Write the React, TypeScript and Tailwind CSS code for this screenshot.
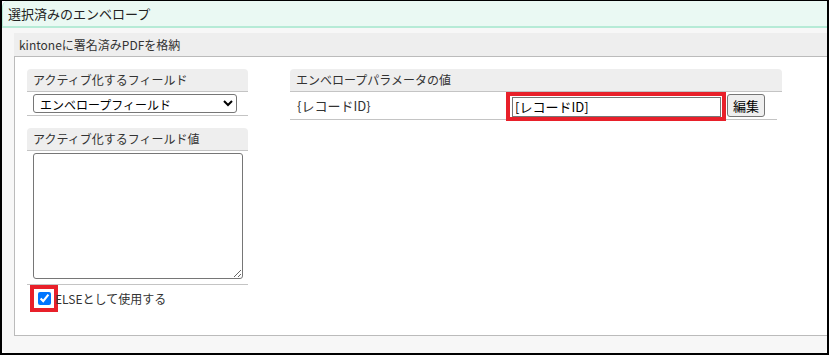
import React from "react";

const font = { fontFamily: '"Noto Sans CJK JP", "Noto Sans", sans-serif' };

function SectionHead({ children, className = "" }: { children: React.ReactNode; className?: string }) {
  return (
    <div
      className={`flex h-[23px] items-center rounded-t-[4px] border-b border-[#c4c4c4] bg-[#eeeeee] px-[6px] text-[12px] leading-none text-[#333] ${className}`}
    >
      {children}
    </div>
  );
}

export default function App() {
  return (
    <div
      className="flex h-[355px] w-[829px] flex-col border-t border-l-2 border-r-2 border-b-2 border-black bg-white"
      style={font}
    >
      <div className="flex h-[27px] shrink-0 items-center rounded-tl-[6px] border-b-2 border-l border-[#b6ebd6] bg-[#eaf9f3] pl-[5px] text-[13px] leading-none text-[#222]">
        選択済みのエンベロープ
      </div>

      <div className="flex flex-1 flex-col rounded-b-[6px] bg-[#f7f7f7] pt-[5px] pl-[12px] pb-[17px]">
        <div className="flex flex-1 flex-col">
          <div className="flex h-[24px] items-center border-b border-[#bbbbbb] bg-[#eeeeee] pl-[5px] text-[12px] leading-none text-[#333]">
            kintoneに署名済みPDFを格納
          </div>

          <div className="flex flex-1 border-l border-b border-[#bbbbbb] bg-white pt-[12px] pl-[12px]">
            <div className="flex w-[221px] flex-col">
              <SectionHead>アクティブ化するフィールド</SectionHead>
              <div className="border-b border-[#c4c4c4] pt-[2px] pb-[2px] pl-[6px]">
                <select
                  className="block h-[19px] w-[204px] rounded-[3px] border border-[#767676] bg-white pl-[2px] text-[12px] leading-none text-black"
                  style={font}
                  defaultValue="env"
                >
                  <option value="env">エンベロープフィールド</option>
                </select>
              </div>

              <SectionHead className="mt-[12px]">アクティブ化するフィールド値</SectionHead>
              <div className="border-b border-[#c4c4c4] pt-[2px] pb-[5px] pl-[6px]">
                <textarea
                  className="block h-[126px] w-[210px] rounded-[3px] border border-[#767676] bg-white"
                  style={font}
                />
              </div>

              <div className="flex items-center">
                <div className="ml-[3px] flex h-[27px] w-[28px] items-center justify-center border-4 border-[#e8202a]">
                  <input type="checkbox" defaultChecked className="block h-[13px] w-[13px] accent-[#0075ff]" />
                </div>
                <span className="-ml-[3px] text-[12px] leading-none text-[#333]">ELSEとして使用する</span>
              </div>
            </div>

            <div className="ml-[42px] flex w-[492px] flex-col">
              <SectionHead>エンベロープパラメータの値</SectionHead>
              <div className="mr-[5px] flex h-[28px] items-start border-b border-[#c4c4c4]">
                <div className="flex h-[27px] w-[216px] items-center pl-[7px] text-[13px] leading-none text-[#333]">
                  {"{レコードID}"}
                </div>
                <div className="relative flex h-[29px] w-[220px] items-center border-4 border-[#e8202a] pl-[2px]">
                  <input
                    type="text"
                    defaultValue="[レコードID]"
                    className="block h-[20px] w-[209px] border border-[#767676] bg-white px-[2px] text-[13px] leading-none text-black"
                    style={font}
                  />
                </div>
                <button
                  className="mt-[2px] ml-[1px] flex h-[23px] w-[38px] items-center justify-center rounded-[3px] border border-[#767676] bg-[#efefef] text-[13px] leading-none text-black"
                  style={font}
                >
                  編集
                </button>
              </div>
            </div>
          </div>
        </div>
      </div>
    </div>
  );
}
